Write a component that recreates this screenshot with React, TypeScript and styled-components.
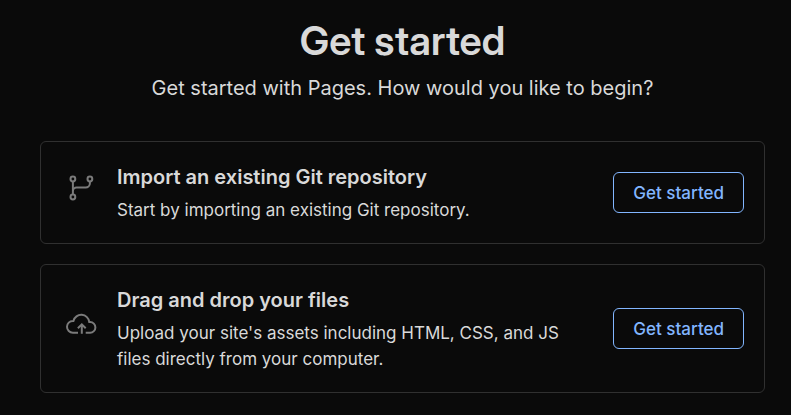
import React from "react";
import styled, { createGlobalStyle } from "styled-components";

const GlobalStyle = createGlobalStyle`
  *, *::before, *::after { box-sizing: border-box; }
  body { margin: 0; background: #0a0a0a; color: #d9d9d9; font-family: "Inter", "Liberation Sans", sans-serif; }
  h1, h2, p { margin: 0; }
`;

const Page = styled.main`
  padding: 16px 26px 22px 40px;
`;

const Header = styled.header`
  text-align: center;
  margin-bottom: 38px;
`;

const Title = styled.h1`
  font-family: "Inter Display", "Inter", "Liberation Sans", sans-serif;
  font-size: 40px;
  line-height: 50px;
  font-weight: 600;
`;

const Subtitle = styled.p`
  margin-top: 7px;
  font-size: 20px;
  line-height: 30px;
`;

const Options = styled.div`
  display: grid;
  gap: 20px;
`;

const Card = styled.section`
  display: flex;
  align-items: center;
  padding: 20px;
  border: 1px solid #303030;
  border-radius: 6px;
`;

const IconSlot = styled.div`
  display: flex;
  flex: none;
  justify-content: center;
  width: 40px;
  padding-bottom: 9px;
  color: #7b7b7b;
`;

const Content = styled.div`
  flex: 1;
  min-width: 0;
  margin: 0 32px 0 16px;
`;

const CardTitle = styled.h2`
  font-size: 20px;
  line-height: 30px;
  font-weight: 600;
`;

const Description = styled.p`
  margin-top: 5px;
  font-size: 17px;
  line-height: 26px;
`;

const Action = styled.button`
  flex: none;
  height: 41px;
  padding: 0 19px;
  border: 1px solid #82b6ff;
  border-radius: 6px;
  background: transparent;
  color: #82b6ff;
  font: 500 17px/24px "Inter", "Liberation Sans", sans-serif;
  cursor: pointer;
`;

const BranchIcon = () => (
  <svg width="30" height="30" viewBox="0 0 30 30" fill="none" stroke="currentColor" strokeWidth="2" aria-hidden="true">
    <circle cx="6.900" cy="6" r="2.400" />
    <circle cx="23.900" cy="6" r="2.400" />
    <circle cx="6.900" cy="24" r="2.400" />
    <path d="M6.900 8.400v13.200M23.900 8.400v1.800a4.300 4.300 0 0 1-4.300 4.300h-9a3.700 3.700 0 0 0-3.700 3.700" />
  </svg>
);

const CloudIcon = () => (
  <svg width="32" height="32" viewBox="0 0 32 32" fill="none" stroke="currentColor" strokeWidth="2" aria-hidden="true">
    <path d="M13 24.700H7.900a5.900 5.900 0 0 1 0-11.800h.5a8.100 8.100 0 0 1 15.900 1.200h.8a5.300 5.300 0 0 1 0 10.600h-4.400M16.800 25.800v-9.300M12.900 20.300l3.900-3.900 3.900 3.900" />
  </svg>
);

const options = [
  { title: "Import an existing Git repository", text: "Start by importing an existing Git repository.", Icon: BranchIcon },
  { title: "Drag and drop your files", text: "Upload your site's assets including HTML, CSS, and JS files directly from your computer.", Icon: CloudIcon },
];

export default function App() {
  return (
    <Page>
      <GlobalStyle />
      <Header>
        <Title>Get started</Title>
        <Subtitle>Get started with Pages. How would you like to begin?</Subtitle>
      </Header>
      <Options>
        {options.map(({ title, text, Icon }) => (
          <Card key={title}>
            <IconSlot><Icon /></IconSlot>
            <Content>
              <CardTitle>{title}</CardTitle>
              <Description>{text}</Description>
            </Content>
            <Action type="button">Get started</Action>
          </Card>
        ))}
      </Options>
    </Page>
  );
}
